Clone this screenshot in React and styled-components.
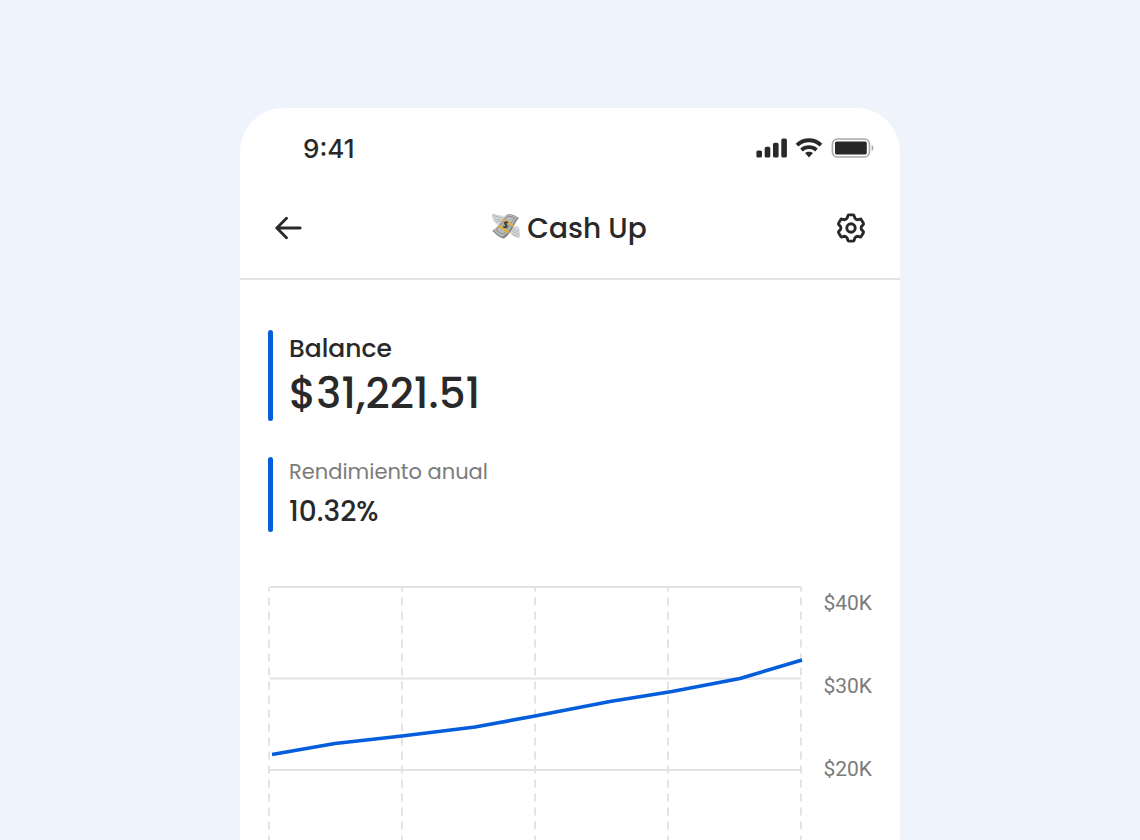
import React from "react";
import styled, { createGlobalStyle } from "styled-components";

const Global = createGlobalStyle`
  *, *::before, *::after { box-sizing: border-box; }
  body {
    margin: 0;
    background: #eff3fb;
    color: #292929;
    font-family: Poppins, Inter, "Open Sans", sans-serif;
  }
`;

const Stage = styled.div`
  min-height: 100vh;
  display: flex;
  flex-direction: column;
  align-items: center;
  padding-top: 108px;
`;

const Phone = styled.main`
  width: 100%;
  max-width: 660px;
  flex: 1;
  background: #fff;
  border-radius: 44px 44px 0 0;
  overflow: hidden;
`;

const StatusBar = styled.div`
  display: flex;
  align-items: center;
  justify-content: space-between;
  height: 82px;
  padding: 0 26px 0 63px;
`;

const Time = styled.span`
  font-family: Inter, sans-serif;
  font-size: 26px;
  line-height: 32px;
  font-weight: 500;
`;

const StatusIcons = styled.div`
  display: flex;
  align-items: center;
  gap: 8px;
  padding-bottom: 2px;

  svg { display: block; }
`;

const Header = styled.header`
  display: flex;
  align-items: center;
  justify-content: space-between;
  height: 90px;
  padding: 0 32px 12px;
  border-bottom: 2px solid #e2e2e4;
`;

const IconButton = styled.button`
  display: grid;
  place-items: center;
  width: 34px;
  height: 34px;
  padding: 0;
  border: 0;
  background: none;
  color: inherit;
  cursor: pointer;
`;

const Title = styled.h1`
  display: flex;
  align-items: center;
  gap: 6px;
  margin: 0;
  padding: 2px 2px 0 0;
  font-size: 28px;
  line-height: 40px;
  font-weight: 500;

  svg { margin-bottom: 4px; }
`;

const Content = styled.div`
  display: flex;
  flex-direction: column;
  gap: 36px;
  padding: 50px 28px 0;
`;

const Stat = styled.section`
  display: flex;
  gap: 16px;

  &::before {
    content: "";
    width: 5px;
    border-radius: 3px;
    background: #045ddb;
  }
`;

const StatText = styled.div`
  display: flex;
  flex-direction: column;
`;

const Label = styled.h2`
  margin: 0;
  font-size: ${(p) => (p.$muted ? "21px" : "25px")};
  line-height: ${(p) => (p.$muted ? "30px" : "38px")};
  font-weight: ${(p) => (p.$muted ? 400 : 500)};
  color: ${(p) => (p.$muted ? "#7b7b7b" : "inherit")};
`;

const Value = styled.p`
  margin: 0;
  padding: ${(p) => (p.$large ? "0 0 1px" : "5px 0 0")};
  font-size: ${(p) => (p.$large ? "42px" : "28px")};
  line-height: ${(p) => (p.$large ? "52px" : "40px")};
  font-weight: 500;
`;

const ChartRow = styled.section`
  display: flex;
  justify-content: space-between;
  padding-top: 18px;
`;

const Plot = styled.svg`
  display: block;
  flex: 0 1 535px;
  min-width: 0;
  height: 254px;
`;

const Scale = styled.ul`
  display: flex;
  flex-direction: column;
  gap: 49px;
  margin: 0;
  padding: 0;
  list-style: none;
  font-family: Roboto, sans-serif;
  font-size: 21px;
  line-height: 34px;
  color: #7b7b7b;
`;

function Signal() {
  return (
    <svg width="31" height="20" viewBox="0 0 31 20" fill="currentColor" aria-hidden="true">
      <rect x="0.4" y="12.5" width="5.6" height="7" rx="1.6" />
      <rect x="8.7" y="8.8" width="5.6" height="10.7" rx="1.6" />
      <rect x="17" y="4.8" width="5.6" height="14.7" rx="1.6" />
      <rect x="25.3" y="0.5" width="5.6" height="19" rx="1.6" />
    </svg>
  );
}

function Wifi() {
  return (
    <svg width="28" height="20" viewBox="0 0 28 20" aria-hidden="true">
      <g fill="none" stroke="currentColor" strokeWidth="3.8">
        <path d="M2 7.2C9 .6 19 .6 26 7.2" />
        <path d="M6.5 12C10.8 8.2 17.2 8.2 21.5 12" />
      </g>
      <path d="M10 15.1c2.3-1.9 5.7-1.9 8 0L14 19.5z" fill="currentColor" />
    </svg>
  );
}

function Battery() {
  return (
    <svg width="43" height="20" viewBox="0 0 43 20" aria-hidden="true">
      <rect x="1.4" y="1" width="37" height="18" rx="5" fill="none" stroke="#a9a9a9" strokeWidth="1.6" />
      <rect x="4" y="3.6" width="31.8" height="12.8" rx="1.6" fill="currentColor" />
      <path d="M40.6 6.8c2.4 1 2.4 5.4 0 6.4z" fill="#a9a9a9" />
    </svg>
  );
}

function BackArrow() {
  return (
    <svg width="28" height="26" viewBox="0 0 28 26" fill="none" stroke="currentColor" strokeWidth="2.8" strokeLinecap="round" strokeLinejoin="round" aria-hidden="true">
      <path d="M25.2 13H1.8M11.5 3.2 1.8 13l9.7 9.8" />
    </svg>
  );
}

function Gear() {
  const turn = (x, y, deg) => {
    const a = (deg * Math.PI) / 180;
    return `${(x * Math.cos(a) - y * Math.sin(a)).toFixed(2)} ${(x * Math.sin(a) + y * Math.cos(a)).toFixed(2)}`;
  };
  const outline = [0, 60, 120, 180, 240, 300]
    .map((d, i) =>
      [
        `${i ? "L" : "M"}${turn(-3.9, -9.8, d)}`,
        `L${turn(-3.2, -12.2, d)}`,
        `Q${turn(-3, -13.1, d)} ${turn(-2.1, -13.1, d)}`,
        `L${turn(2.1, -13.1, d)}`,
        `Q${turn(3, -13.1, d)} ${turn(3.2, -12.2, d)}`,
        `L${turn(3.9, -9.8, d)}`,
        `Q${turn(4.9, -8.5, d)} ${turn(-3.9, -9.8, d + 60)}`,
      ].join("")
    )
    .join("");
  return (
    <svg width="32" height="32" viewBox="-16 -16 32 32" fill="none" stroke="currentColor" strokeWidth="2.9" strokeLinejoin="round" aria-hidden="true">
      <path d={`${outline}Z`} />
      <circle r="4.2" />
    </svg>
  );
}

function FlyingMoney() {
  return (
    <svg width="30" height="28" viewBox="0 0 30 28" aria-hidden="true">
      <path d="M1 1c2-1 4 .5 6 1l6 1-1 4-4 5c-2 0-3.500-1-3.500-2.500C2.500 9 2 7.500 2.500 6.500 1 5.500.5 3 1 1z" fill="#d5d8da" />
      <path d="M2 2.500 11 5M3 6l7 1M4.500 9l5-1" stroke="#a9adaf" strokeWidth=".8" />
      <path d="m20 15 5-2c2 .5 4 2 4 4-1 1-.5 2 0 3 .5 2-.5 3 0 5-3 0-6-1-8-3-2-1.500-3-3-3-4z" fill="#d5d8da" />
      <path d="m22 16 6 3m-7-1 7 4m-7-1 6 3" stroke="#a9adaf" strokeWidth=".8" />
      <path d="M1.500 17.500C8 15 11 5 16 1.500c4-.8 8 .5 12 3.500-4 3-6 14-15 20.500-2 .5-9-4-11.500-8z" fill="#858885" />
      <path d="M2.500 16.500C8 14 11 5 16 1.800c4-.5 7 .6 10.500 3-4 3-6 12-14.500 18.700-2 .2-7-3-9.500-7z" fill="#b9bbb8" />
      <path d="M5 16.700C10 13 12 6 17 3.300c2.500 0 4.500.5 7 2-4 3-6 11-12 15.700-2-.5-5-2-7-4.300z" fill="none" stroke="#858885" strokeWidth=".9" />
      <ellipse cx="14.5" cy="12" rx="4" ry="4.700" transform="rotate(35 14.5 12)" fill="#a5a8a3" />
      <path d="m12 5.500 11 6.800-.8 1.700-11-6.800z" fill="#e7ae35" />
      <path d="m8 11.800 10.500 7-1 1.700L7 13.500z" fill="#e7ae35" />
      <path d="M17 9.700c-2-1.700-4-.4-3.300 1.200.6 1.500 2.600.7 2.500 2.400-.1 1.500-2.500 1.700-3.800.2m3-5-.9 6.500" fill="none" stroke="#383a38" strokeWidth="1.2" />
    </svg>
  );
}

const columns = [1, 134, 267, 400, 533];
const rows = [1, 92.5, 184];
const trend = "4,168.5 67,157.5 134,150 207,141 267,130 342,115.5 404,105.5 472,92.5 534,74";

function Chart() {
  return (
    <ChartRow aria-label="Balance history">
      <Plot viewBox="0 0 535 254" preserveAspectRatio="none" fill="none">
        {columns.map((x) => (
          <path key={x} d={`M${x} 1V254`} stroke="#e2e2e4" strokeWidth="1.9" strokeDasharray="8 6" strokeDashoffset="3.5" />
        ))}
        {rows.map((y) => (
          <path key={y} d={`M2 ${y}H533`} stroke="#e2e2e4" strokeWidth="1.9" />
        ))}
        <polyline points={trend} stroke="#045ddb" strokeWidth="3.6" strokeLinejoin="round" />
      </Plot>
      <Scale>
        <li>$40K</li>
        <li>$30K</li>
        <li>$20K</li>
      </Scale>
    </ChartRow>
  );
}

export default function App() {
  return (
    <>
      <Global />
      <Stage>
        <Phone>
          <StatusBar>
            <Time>9:41</Time>
            <StatusIcons>
              <Signal />
              <Wifi />
              <Battery />
            </StatusIcons>
          </StatusBar>
          <Header>
            <IconButton aria-label="Back">
              <BackArrow />
            </IconButton>
            <Title>
              <FlyingMoney />
              Cash Up
            </Title>
            <IconButton aria-label="Settings">
              <Gear />
            </IconButton>
          </Header>
          <Content>
            <Stat>
              <StatText>
                <Label>Balance</Label>
                <Value $large>$31,221.51</Value>
              </StatText>
            </Stat>
            <Stat>
              <StatText>
                <Label $muted>Rendimiento anual</Label>
                <Value>10.32%</Value>
              </StatText>
            </Stat>
            <Chart />
          </Content>
        </Phone>
      </Stage>
    </>
  );
}
